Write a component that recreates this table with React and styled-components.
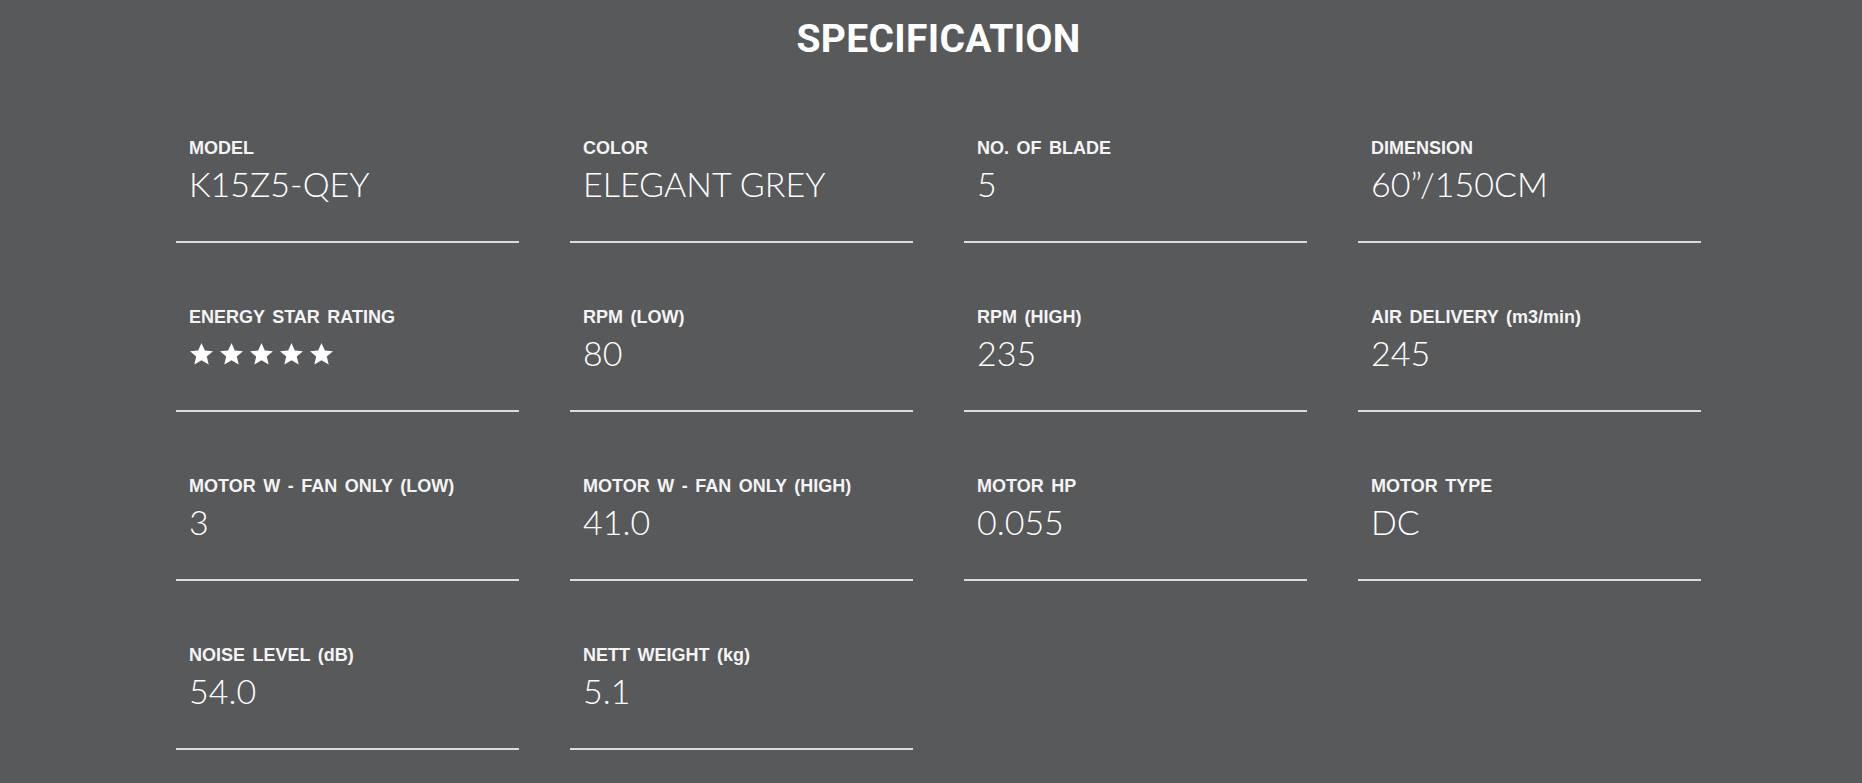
import React from "react";
import styled, { createGlobalStyle } from "styled-components";

const GlobalStyle = createGlobalStyle`
  html, body {
    margin: 0;
    padding: 0;
    background: #58595b;
    overflow: hidden;
  }
`;

const Page = styled.section`
  height: 100vh;
  background: #58595b;
  padding: 20px 0 0 176px;
  box-sizing: border-box;
  color: #fff;
`;

const Title = styled.h2`
  margin: 0 0 79px;
  width: 1525px;
  text-align: center;
  font-family: Roboto, "Liberation Sans", sans-serif;
  font-weight: 700;
  font-size: 39px;
  line-height: 39px;
  letter-spacing: 0.3px;
  color: #fff;
`;

const Grid = styled.div`
  display: grid;
  grid-template-columns: repeat(4, 343px);
  column-gap: 51px;
  row-gap: 64px;
`;

const Cell = styled.div`
  padding: 0 0 37px 13px;
  border-bottom: 2px solid #dcdcdc;
`;

const Label = styled.div`
  font-family: "Liberation Sans", Arial, sans-serif;
  font-weight: 700;
  font-size: 18px;
  line-height: 20px;
  word-spacing: 2.5px;
  color: #f4f4f4;
  white-space: nowrap;
`;

const Value = styled.div`
  margin-top: 6px;
  height: 40px;
  font-family: Lato, "Open Sans", sans-serif;
  font-weight: 300;
  font-size: 34px;
  line-height: 40px;
  color: #fff;
  white-space: nowrap;
`;

const Stars = styled.div`
  margin-top: 6px;
  height: 40px;
  display: flex;
  align-items: flex-start;
  gap: 5px;
  padding-top: 9px;
  box-sizing: border-box;
`;

const Star = () => (
  <svg width="25" height="25" viewBox="0 0 24 24">
    <path
      d="M12 1l3.2 7.2 7.8.7-5.9 5.1 1.8 7.7L12 17.6 5.1 21.7l1.8-7.7L1 8.9l7.8-.7z"
      fill="#fff"
    />
  </svg>
);

const specs = [
  { label: "MODEL", value: "K15Z5-QEY" },
  { label: "COLOR", value: "ELEGANT GREY" },
  { label: "NO. OF BLADE", value: "5" },
  { label: "DIMENSION", value: "60\u201D/150CM" },
  { label: "ENERGY STAR RATING", stars: 5 },
  { label: "RPM (LOW)", value: "80" },
  { label: "RPM (HIGH)", value: "235" },
  { label: "AIR DELIVERY (m3/min)", value: "245" },
  { label: "MOTOR W - FAN ONLY (LOW)", value: "3" },
  { label: "MOTOR W - FAN ONLY (HIGH)", value: "41.0" },
  { label: "MOTOR HP", value: "0.055" },
  { label: "MOTOR TYPE", value: "DC" },
  { label: "NOISE LEVEL (dB)", value: "54.0" },
  { label: "NETT WEIGHT (kg)", value: "5.1" },
];

const App = () => {
  return (
    <>
      <GlobalStyle />
      <Page>
        <Title>SPECIFICATION</Title>
        <Grid>
          {specs.map((spec) => (
            <Cell key={spec.label}>
              <Label>{spec.label}</Label>
              {spec.stars ? (
                <Stars>
                  {Array.from({ length: spec.stars }).map((_, i) => (
                    <Star key={i} />
                  ))}
                </Stars>
              ) : (
                <Value>{spec.value}</Value>
              )}
            </Cell>
          ))}
        </Grid>
      </Page>
    </>
  );
};

export default App;
